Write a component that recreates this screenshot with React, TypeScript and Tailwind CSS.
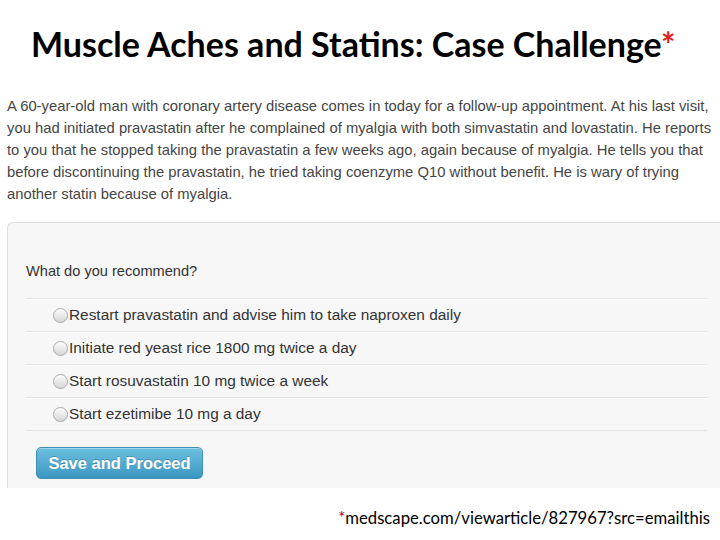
import React from 'react';

const options = [
  'Restart pravastatin and advise him to take naproxen daily',
  'Initiate red yeast rice 1800 mg twice a day',
  'Start rosuvastatin 10 mg twice a week',
  'Start ezetimibe 10 mg a day',
];

function Radio() {
  return (
    <span className="inline-block w-[15px] h-[15px] rounded-full border border-[#a9a9a9] bg-gradient-to-b from-[#fdfdfd] to-[#d6d6d6] shadow-[inset_0_1px_1px_rgba(255,255,255,0.9)] mr-[1px] shrink-0" />
  );
}

export default function App() {
  return (
    <div className="w-[720px] h-[540px] bg-white overflow-hidden flex flex-col">
      {/* Slide title */}
      <div className="h-[90px] pl-[31px] pt-[20px]">
        <h1 className="font-['Lato',sans-serif] font-bold text-[34px] leading-[48px] text-black whitespace-nowrap">
          Muscle Aches and Statins: Case Challenge<span className="text-[#e02020]">*</span>
        </h1>
      </div>

      {/* Case text */}
      <p className="pl-[7px] pt-[5px] font-['Liberation_Sans',Arial,sans-serif] text-[14.8px] leading-[22px] text-[#454545] whitespace-nowrap">
        A 60-year-old man with coronary artery disease comes in today for a follow-up appointment. At his last visit,<br />
        you had initiated pravastatin after he complained of myalgia with both simvastatin and lovastatin. He reports<br />
        to you that he stopped taking the pravastatin a few weeks ago, again because of myalgia. He tells you that<br />
        before discontinuing the pravastatin, he tried taking coenzyme Q10 without benefit. He is wary of trying<br />
        another statin because of myalgia.
      </p>

      {/* Question panel */}
      <div className="mt-[17px] ml-[7px] h-[266px] bg-[#f7f7f7] border-t border-l border-[#dedede] rounded-tl-[6px] pl-[18px] pr-[13px] pt-[37px] font-['Liberation_Sans',Arial,sans-serif] text-[#333]">
        <div className="text-[14.6px] leading-[22px] mb-[16px]">What do you recommend?</div>
        <div className="border-b border-[#e4e4e4]">
          {options.map((o) => (
            <div key={o} className="h-[33px] border-t border-[#e4e4e4] shadow-[inset_0_1px_0_#ffffff] flex items-center pl-[27px] text-[15.4px]">
              <Radio />
              <span>{o}</span>
            </div>
          ))}
        </div>
        <button className="mt-[16px] ml-[10px] w-[167px] h-[32px] rounded-[5px] border border-[#3e8fb3] bg-gradient-to-b from-[#6cc0e0] to-[#3b97c1] text-white font-bold text-[16.5px] [text-shadow:0_-1px_0_rgba(0,0,0,0.2)] shadow-[inset_0_1px_0_rgba(255,255,255,0.35)]">
          Save and Proceed
        </button>
      </div>

      {/* Source */}
      <div className="flex justify-end pr-[10px] pt-[18px] font-['Lato',sans-serif] text-[16.7px] text-black">
        <span><span className="text-[#c00000]">*</span>medscape.com/viewarticle/827967?src=emailthis</span>
      </div>
    </div>
  );
}
